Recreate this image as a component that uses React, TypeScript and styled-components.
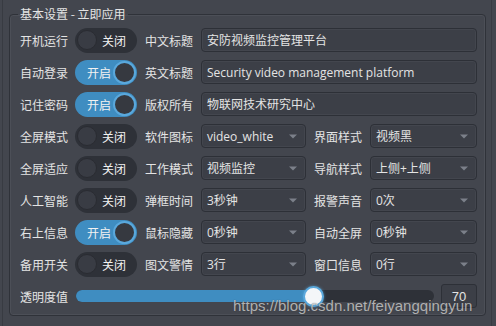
import React from 'react';
import styled, { createGlobalStyle } from 'styled-components';

const colors = {
  page: '#43464e',
  field: '#3c3f47',
  fieldBorder: '#2d3037',
  trackOff: '#2e3138',
  blue: '#3f8dc1',
  blueLight: '#5aa8dc',
  text: '#e4e4e4',
  arrow: '#7c808a',
};

const GlobalStyle = createGlobalStyle`
  body {
    margin: 0;
    background: ${colors.page};
    font-family: "Noto Sans CJK SC", "Noto Sans", sans-serif;
    color: ${colors.text};
  }
`;

const switches: [string, boolean][] = [
  ['开机运行', false],
  ['自动登录', true],
  ['记住密码', true],
  ['全屏模式', false],
  ['全屏适应', false],
  ['人工智能', false],
  ['右上信息', true],
  ['备用开关', false],
];

const textRows = [
  ['中文标题', '安防视频监控管理平台'],
  ['英文标题', 'Security video management platform'],
  ['版权所有', '物联网技术研究中心'],
];

const comboRows = [
  ['软件图标', 'video_white', '界面样式', '视频黑'],
  ['工作模式', '视频监控', '导航样式', '上侧+上侧'],
  ['弹框时间', '3秒钟', '报警声音', '0次'],
  ['鼠标隐藏', '0秒钟', '自动全屏', '0秒钟'],
  ['图文警情', '3行', '窗口信息', '0行'],
];

const opacity = 70;
const sliderRatio = 0.663;

export default function App() {
  return (
    <>
      <GlobalStyle />
      <Window>
        <GroupBox>
          <Legend>基本设置 - 立即应用</Legend>
          <Grid>
            {switches.map(([label, on], i) => (
              <React.Fragment key={label}>
                <Label>{label}</Label>
                <Switch $on={on}>
                  <SwitchText>{on ? '开启' : '关闭'}</SwitchText>
                  <Knob $on={on} />
                </Switch>
                {i < 3 ? (
                  <>
                    <Label>{textRows[i][0]}</Label>
                    <TextInput $wide>{textRows[i][1]}</TextInput>
                  </>
                ) : (
                  <>
                    <Label>{comboRows[i - 3][0]}</Label>
                    <Combo value={comboRows[i - 3][1]} />
                    <Label>{comboRows[i - 3][2]}</Label>
                    <Combo value={comboRows[i - 3][3]} />
                  </>
                )}
              </React.Fragment>
            ))}
          </Grid>
          <SliderRow>
            <Label>透明度值</Label>
            <Slider>
              <Track>
                <Fill style={{ width: `${sliderRatio * 100}%` }} />
              </Track>
              <Handle style={{ left: `${sliderRatio * 100}%` }} />
            </Slider>
            <ValueBox>{opacity}</ValueBox>
          </SliderRow>
        </GroupBox>
        <Watermark>https://blog.csdn.net/feiyangqingyun</Watermark>
      </Window>
    </>
  );
}

function Combo({ value }: { value: string }) {
  return (
    <TextInput>
      <span>{value}</span>
      <svg width="8" height="5" viewBox="0 0 8 5">
        <path d="M0 0.5 L8 0.5 L4 4.5 Z" fill={colors.arrow} />
      </svg>
    </TextInput>
  );
}

const Window = styled('div')`
  position: relative;
  width: 490px;
  height: 326px;
  margin-left: 2px;
  overflow: hidden;
  box-sizing: border-box;
  border-left: 1px solid #383b42;
  border-right: 1px solid #383b42;
`;

const GroupBox = styled('fieldset')`
  box-sizing: border-box;
  width: 477px;
  height: 310px;
  margin: 6px 0 0 6px;
  padding: 5px 8px 0 10px;
  border: 1px solid #2f3239;
  border-radius: 4px;
  box-shadow: inset 0 0 0 1px rgba(255, 255, 255, 0.05);
`;

const Legend = styled('legend')`
  font-size: 12px;
  line-height: 16px;
  padding: 0 2px;
  margin-left: -2px;
`;

const Grid = styled('div')`
  display: grid;
  grid-template-columns: 47px 62px 48px 105px 48px 1fr;
  grid-auto-rows: 26px;
  column-gap: 8px;
  row-gap: 6px;
  align-items: center;
`;

const Label = styled('div')`
  font-size: 12px;
  white-space: nowrap;
`;

const Switch = styled('div')<{ $on: boolean }>`
  display: flex;
  flex-direction: ${(p) => (p.$on ? 'row' : 'row-reverse')};
  align-items: center;
  justify-content: space-between;
  box-sizing: border-box;
  height: 25px;
  border-radius: 13px;
  padding: ${(p) => (p.$on ? '0 1px 0 12px' : '0 11px 0 2px')};
  background: ${(p) => (p.$on ? colors.blue : colors.trackOff)};
`;

const SwitchText = styled('span')`
  font-size: 12px;
  color: #f2f2f2;
`;

const Knob = styled('div')<{ $on: boolean }>`
  box-sizing: border-box;
  width: ${(p) => (p.$on ? 23 : 20)}px;
  height: ${(p) => (p.$on ? 23 : 20)}px;
  border-radius: 50%;
  background: ${(p) => (p.$on ? '#363940' : '#393c44')};
  border: ${(p) => (p.$on ? `2px solid ${colors.blueLight}` : '1px solid #2a2c32')};
`;

const TextInput = styled('div')<{ $wide?: boolean }>`
  grid-column: ${(p) => (p.$wide ? 'span 3' : 'auto')};
  display: flex;
  align-items: center;
  justify-content: space-between;
  box-sizing: border-box;
  height: 24px;
  padding: 0 8px 0 5px;
  background: ${colors.field};
  border: 1px solid ${colors.fieldBorder};
  border-radius: 4px;
  box-shadow: inset 0 0 0 1px rgba(255, 255, 255, 0.04);
  font-family: "Open Sans", "Noto Sans CJK SC", sans-serif;
  font-size: 12px;
  white-space: nowrap;
  overflow: hidden;
`;

const SliderRow = styled('div')`
  display: flex;
  align-items: center;
  height: 26px;
  margin-top: 6px;
  gap: 8px;
`;

const Slider = styled('div')`
  position: relative;
  flex: 1;
  height: 20px;
  display: flex;
  align-items: center;
  margin-right: -1px;
`;

const Track = styled('div')`
  width: 100%;
  height: 12px;
  border-radius: 6px;
  background: ${colors.trackOff};
  overflow: hidden;
`;

const Fill = styled('div')`
  height: 100%;
  background: ${colors.blue};
`;

const Handle = styled('div')`
  position: absolute;
  top: -0.5px;
  width: 21px;
  height: 21px;
  margin-left: -10px;
  box-sizing: border-box;
  border-radius: 50%;
  background: #f4f6f8;
  border: 2px solid ${colors.blueLight};
  box-shadow: 0 0 3px rgba(90, 168, 220, 0.7);
`;

const ValueBox = styled('div')`
  width: 36px;
  height: 24px;
  box-sizing: border-box;
  border: 1px solid ${colors.fieldBorder};
  border-radius: 3px;
  background: ${colors.field};
  font-family: "Liberation Sans", sans-serif;
  font-size: 13px;
  display: flex;
  align-items: center;
  justify-content: center;
`;

const Watermark = styled('div')`
  position: absolute;
  left: 230px;
  top: 297px;
  font-family: "Liberation Sans", sans-serif;
  font-size: 15px;
  color: rgba(225, 225, 225, 0.72);
  text-shadow: 0 0 1px rgba(40, 40, 40, 0.6);
  white-space: nowrap;
  pointer-events: none;
`;
